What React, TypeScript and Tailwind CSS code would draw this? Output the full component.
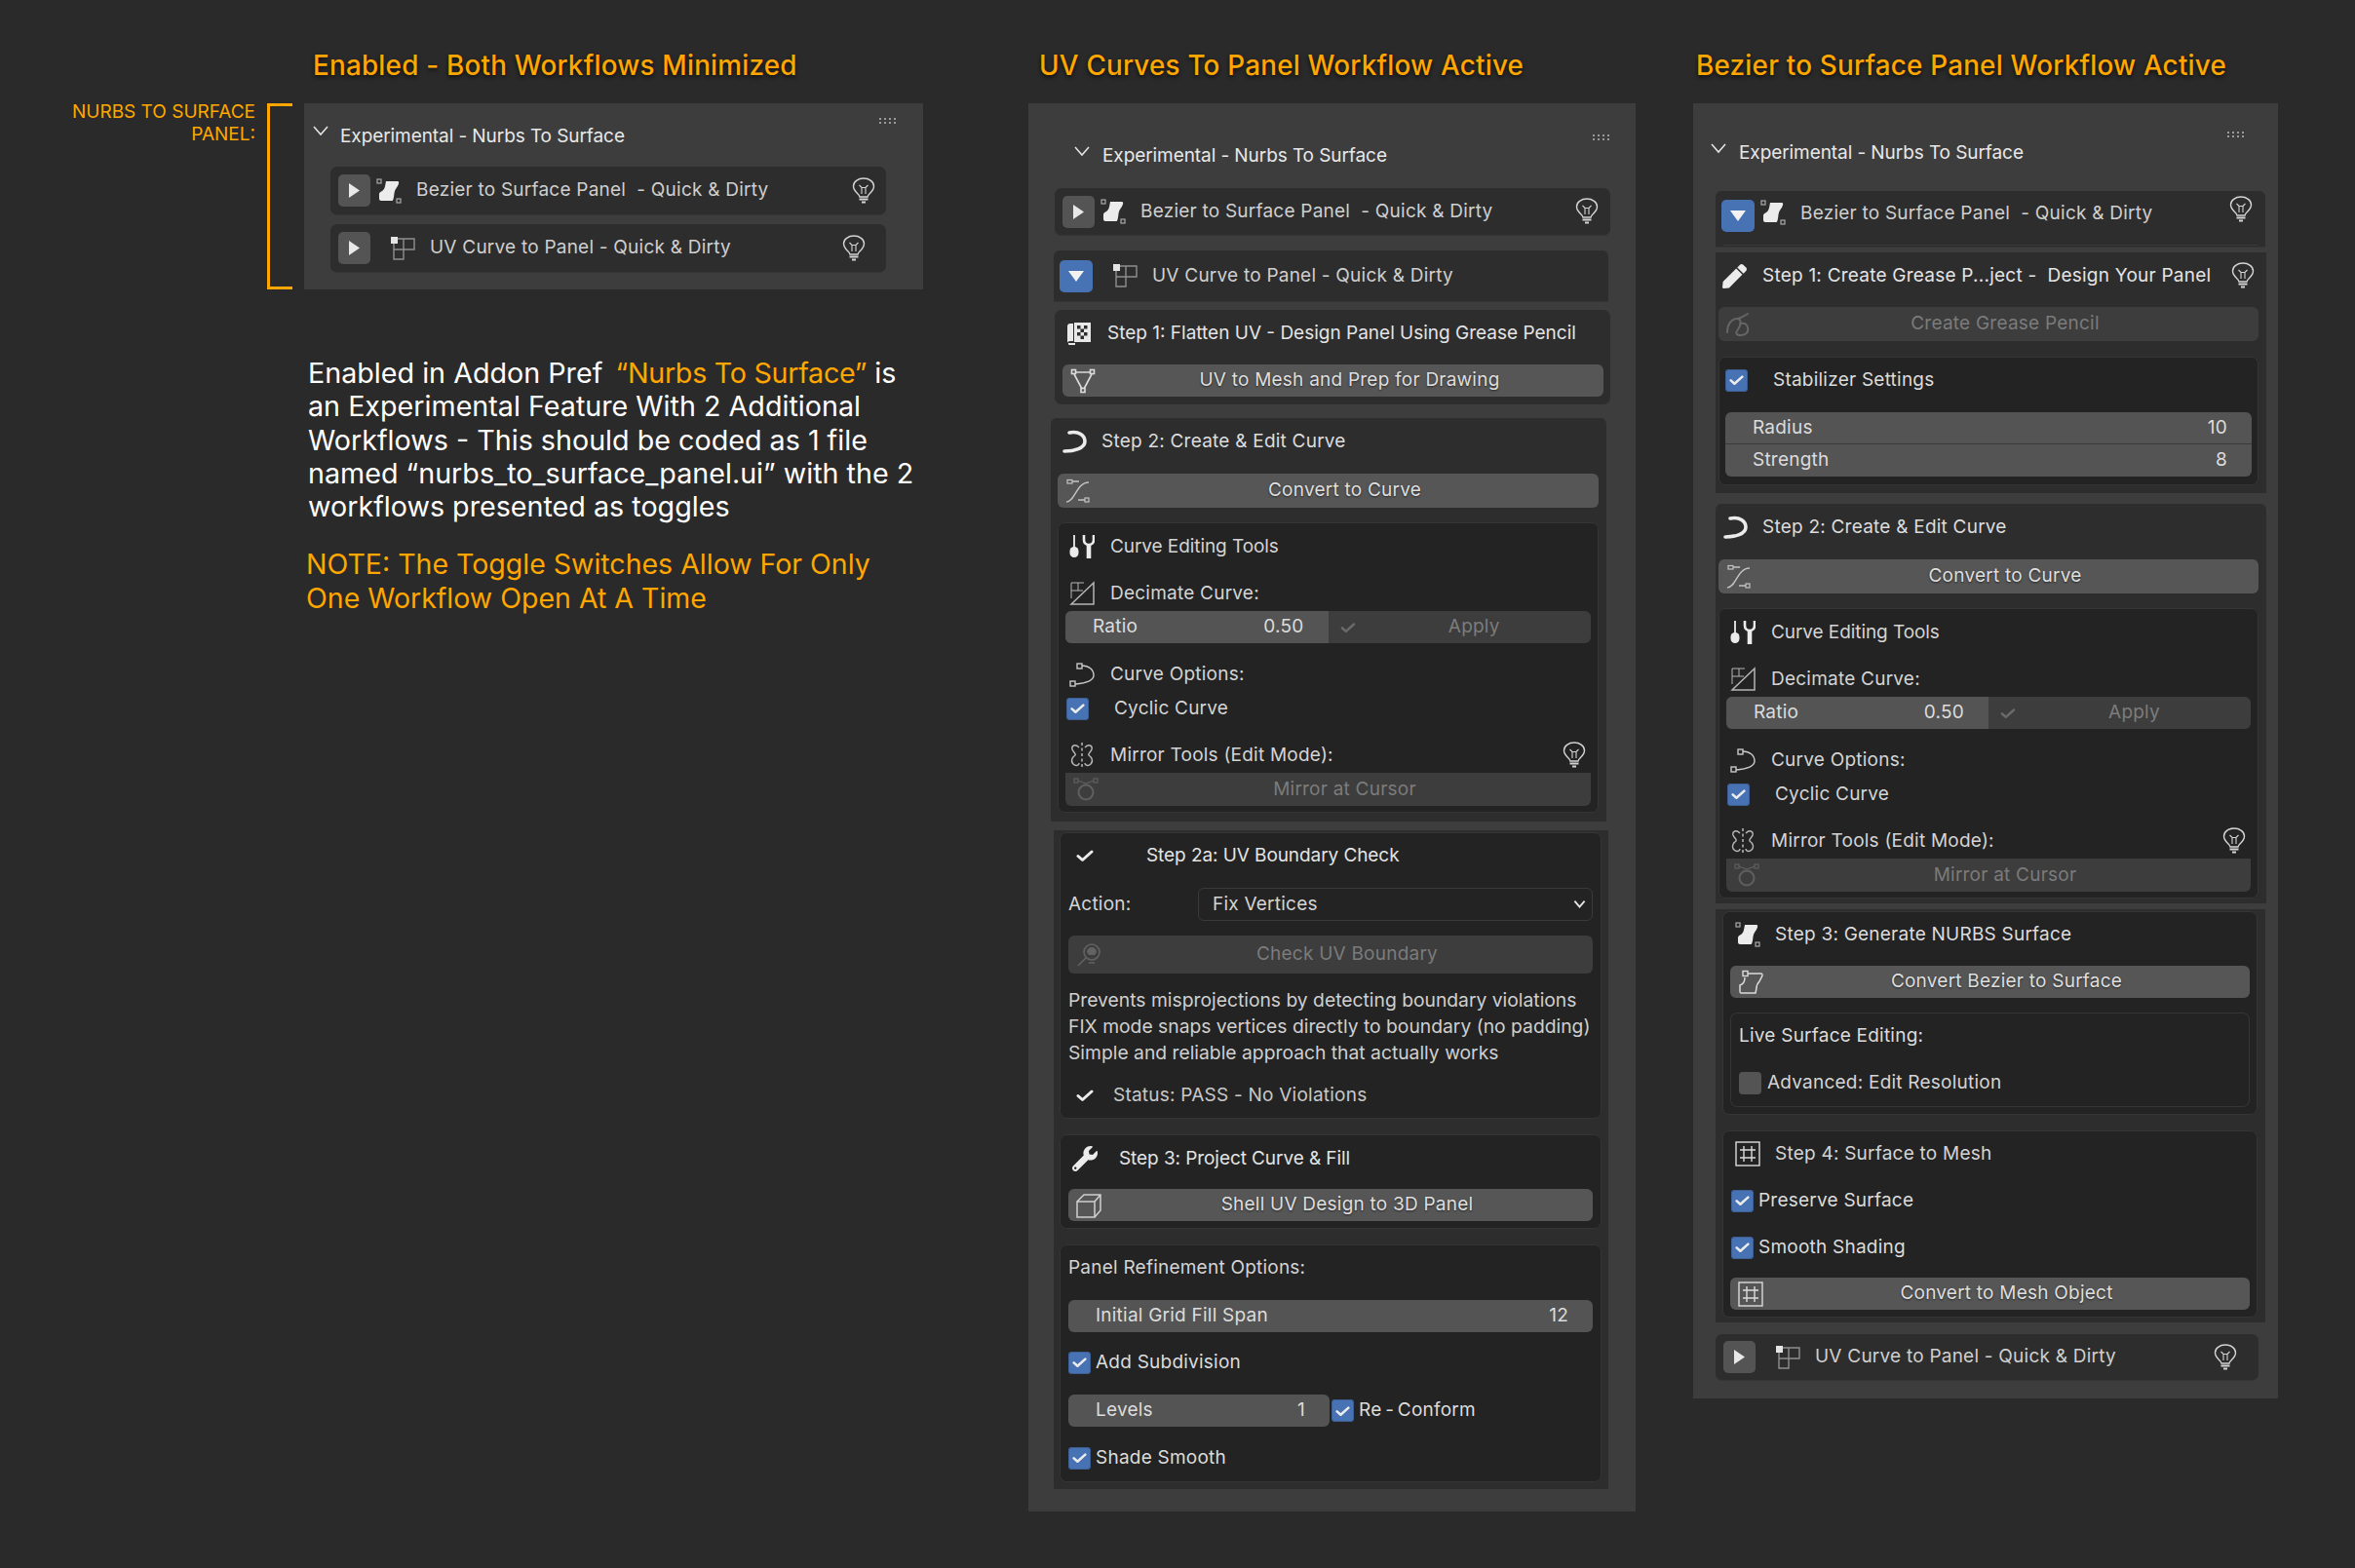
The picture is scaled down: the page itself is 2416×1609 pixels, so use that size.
import type { ReactNode } from "react";
import { FaPen, FaWrench } from "react-icons/fa";

const Svg = ({ children, className = "" }: { children: ReactNode; className?: string }) => (
  <svg viewBox="0 0 26 26" fill="none" stroke="currentColor" strokeWidth="1.6" className={`h-[26px] w-[26px] shrink-0 ${className}`}>
    {children}
  </svg>
);

const Chevron = ({ className = "h-[11px] w-[16px]", weight = 1.5 }: { className?: string; weight?: number }) => (
  <svg viewBox="0 0 16 11" fill="none" stroke="#e6e6e6" strokeWidth={weight} className={className}>
    <path d="M1 1l7 8 7-8" />
  </svg>
);

const Grip = ({ className = "" }: { className?: string }) => (
  <svg viewBox="0 0 18 6" fill="#9a9a9a" className={`absolute h-[6px] w-[18px] ${className}`}>
    {[0, 5, 10, 15].map((x) => (
      <g key={x}>
        <rect x={x} y="0" width="2" height="2" />
        <rect x={x} y="4" width="2" height="2" />
      </g>
    ))}
  </svg>
);

const SurfaceIcon = ({ className = "text-[#ececec]" }: { className?: string }) => (
  <Svg className={className}>
    <rect x="1" y="1" width="4" height="4" stroke="#aaa" strokeWidth="1.2" />
    <rect x="21" y="21" width="4" height="4" stroke="#aaa" strokeWidth="1.2" />
    <path fill="currentColor" stroke="none" d="M10 3h12c1 0 1.500 1 1 2.500C22 9 19 11 18.500 15c-.2 3-1 8-2 8H5c-1 0-2-1-2-2v-5c0-1 1-2 3-3 3-2 3-5 4-10z" />
  </Svg>
);

const UvIcon = () => (
  <Svg className="text-[#8f8f8f]">
    <rect x="1" y="1" width="7" height="7" fill="#e4e4e4" stroke="none" />
    <path strokeWidth="1.4" d="M8 3h17v11H4M14 3v21H4V8" />
  </Svg>
);

const Bulb = ({ className = "" }: { className?: string }) => (
  <svg viewBox="0 0 24 28" fill="none" stroke="#d4d4d4" strokeWidth="1.4" className={`h-[28px] w-[24px] shrink-0 ${className}`}>
    <path d="M8 20c0-3-6.500-5-6.500-11a10.500 8 0 0 1 21 0c0 6-6.500 8-6.500 11z" />
    <path d="M7.500 8l2.500 2.500h4L16.500 8M10 10.500V17M14 10.500V17" strokeWidth="1.100" />
    <path d="M7.500 22.500h9M10 25.500h4" strokeWidth="1.800" />
  </svg>
);

const FlattenIcon = () => (
  <Svg className="text-[#e8e8e8]">
    <path fill="currentColor" stroke="none" d="M1 6c0-2 1-3 3-3h3v18H4c-2 0-3 1-3 2zM2 23h7v2H3c-1 0-1-1-1-2z" />
    <path fill="currentColor" stroke="none" d="M8 2h17v20H8zm3 3v3.500h3.500V5zm7 0v3.500h3.500V5zm-3.500 3.500V12H18V8.500zM11 12v3.500h3.500V12zm7 0v3.500h3.500V12zm-3.500 3.500V19H18v-3.500z" fillRule="evenodd" />
  </Svg>
);

const MeshIcon = () => (
  <Svg className="text-[#dcdcdc]">
    <path d="M5 4h16M4 6l8 15M22 6l-8 15" />
    <rect x="1.500" y="1.500" width="4" height="4" />
    <rect x="20.500" y="1.500" width="4" height="4" />
    <rect x="11" y="20.500" width="4" height="4" />
  </Svg>
);

const HookIcon = () => (
  <Svg className="text-[#ececec]">
    <path strokeWidth="3.600" strokeLinecap="round" d="M8 4c10-2 16 3 16 9 0 7-11 10-21 10" />
  </Svg>
);

const BezierIcon = () => (
  <Svg className="text-[#c4c4c4]">
    <path strokeWidth="1.400" d="M1 24c9 0 10-20 23-20M7 3h7M13 22h7" />
    <rect x="2" y="1.500" width="5" height="3.500" strokeWidth="1.200" />
    <rect x="20" y="20" width="4" height="4" strokeWidth="1.200" />
  </Svg>
);

const ToolsIcon = () => (
  <Svg className="text-[#ececec]">
    <path strokeWidth="1.800" d="M5 1v13" />
    <rect x="0.500" y="13" width="9" height="11" rx="4.500" fill="currentColor" stroke="none" />
    <path strokeWidth="2.600" d="M15 1v5c0 3 2 5 5 5s5-2 5-5V1" />
    <path strokeWidth="4.600" d="M20 10v15" />
  </Svg>
);

const DecimateIcon = () => (
  <Svg className="text-[#b5b5b5]">
    <path strokeWidth="1.500" d="M2 24L25 2v22z" />
    <path strokeWidth="1" d="M2 18V2h13M2 10h12M9 2v8" />
  </Svg>
);

const CurveOptionsIcon = () => (
  <Svg className="text-[#c8c8c8]">
    <path strokeWidth="1.400" d="M13 4c7 0 12 4 12 10 0 5-8 8-19 9" />
    <rect x="8" y="2" width="5" height="5" strokeWidth="1.400" />
    <rect x="1" y="20" width="5" height="5" strokeWidth="1.400" />
  </Svg>
);

const MirrorIcon = () => (
  <Svg className="text-[#b8b8b8]">
    <path strokeWidth="1.400" d="M10 5C6 1 2 3 3 7c1 3 4 4 3 6-3 2-5 6-2 9 3 3 6 1 6-1M16 5c4-4 8-2 7 2-1 3-4 4-3 6 3 2 5 6 2 9-3 3-6 1-6-1" />
    <path strokeWidth="1.500" strokeDasharray="3 2.500" d="M13 0v26" />
  </Svg>
);

const CursorIcon = () => (
  <Svg className="text-[#5f5f5f]">
    <circle cx="13" cy="16" r="7.500" strokeWidth="2" />
    <path strokeWidth="1.200" d="M5 4l8 3 8-3" />
    <rect x="1" y="2" width="4" height="4" strokeWidth="1.200" />
    <rect x="21" y="2" width="4" height="4" strokeWidth="1.200" />
  </Svg>
);

const CheckIcon = ({ className = "h-[14px] w-[18px]" }: { className?: string }) => (
  <svg viewBox="0 0 18 14" fill="none" stroke="#ececec" strokeWidth="3" strokeLinecap="round" strokeLinejoin="round" className={`shrink-0 ${className}`}>
    <path d="M2 7.500l4.500 4L16 3" />
  </svg>
);

const SearchIcon = () => (
  <Svg className="text-[#626262]">
    <circle cx="16" cy="10" r="8" strokeWidth="1.600" />
    <path fill="currentColor" stroke="none" d="M11 10a5 5 0 0 1 10 0l-2 3h-6z" />
    <path strokeWidth="1.600" d="M10 16l-8 8M13 21h6" />
  </Svg>
);

const CubeIcon = () => (
  <Svg className="text-[#d0d0d0]">
    <path strokeWidth="1.500" d="M1 9h18v16H1zM1 9l7-7h17v16l-6 7M19 9l6-7" />
  </Svg>
);

const SquiggleIcon = () => (
  <Svg className="text-[#666]">
    <path strokeWidth="2" strokeLinecap="round" d="M1 21c0-8 4-14 10-14 5 0 4 7 1 11s-2 6 3 6c5 0 8-3 7-8-1-4-4-5-7-4M12 7c3-1 7-3 10-5" />
  </Svg>
);

const SurfaceOutlineIcon = () => (
  <Svg className="text-[#dcdcdc]">
    <rect x="5" y="1.500" width="5" height="5" strokeWidth="1.400" />
    <path strokeWidth="1.500" d="M10 4h14c1 0 1 1 1 2l-3 6c-2 2-3 4-3 7l-1 5H3c-1 0-1-1-1-2v-6c3-1 5-3 5-8" />
  </Svg>
);

const GridIcon = () => (
  <Svg className="text-[#dcdcdc]">
    <rect x="1" y="1" width="24" height="24" strokeWidth="1.400" />
    <path strokeWidth="1.400" d="M9 5v16M17 5v16M5 9h16M5 17h16" />
  </Svg>
);

// the outline is an inset shadow, so it takes no room from the rows inside
const Box = ({ className = "", children }: { className?: string; children: ReactNode }) => (
  <div className={`rounded-[7px] bg-[#232323] shadow-[inset_0_0_0_1px_#353535] ${className}`}>{children}</div>
);

const Check = ({ on = true }: { on?: boolean }) => (
  <span className={`flex h-[23px] w-[23px] shrink-0 items-center justify-center rounded-[4px] ${on ? "bg-[#4772b3] shadow-[inset_0_0_0_1px_#3d5f94]" : "bg-[#545454]"}`}>
    {on && <CheckIcon className="h-[12px] w-[15px]" />}
  </span>
);

const Btn = ({ icon, label, dim = false, className = "" }: { icon: ReactNode; label: string; dim?: boolean; className?: string }) => (
  <div className={`flex items-center rounded-[6px] pl-[8px] ${dim ? "bg-[#3d3d3d] text-[#7b7b7b]" : "bg-[#565656] text-[#dedede] [text-shadow:0_1px_2px_rgba(0,0,0,0.55)]"} ${className}`}>
    {icon}
    <span className="flex-1 text-center">{label}</span>
  </div>
);

const Field = ({ label, value, className = "" }: { label: string; value: string; className?: string }) => (
  <div className={`flex h-[33px] items-center justify-between bg-[#545454] pl-[28px] pr-[25px] text-[#dcdcdc] ${className}`}>
    <span>{label}</span>
    <span>{value}</span>
  </div>
);

const Toggle = ({ active }: { active: boolean }) => (
  <span className={`flex h-[33px] shrink-0 items-center justify-center rounded-[5px] ${active ? "w-[34px] bg-[#4772b3]" : "w-[33px] bg-[#545454]"}`}>
    {active ? (
      <svg viewBox="0 0 16 12" fill="#f2f2f2" className="mt-[1px] h-[12px] w-[16px]"><path d="M0 0h16L8 11z" /></svg>
    ) : (
      <svg viewBox="0 0 11 15" fill="#e8e8e8" className="h-[15px] w-[11px]"><path d="M0 0l11 7.500L0 15z" /></svg>
    )}
  </span>
);

const BEZIER = "Bezier to Surface Panel  - Quick & Dirty";
const UVCURVE = "UV Curve to Panel - Quick & Dirty";

const Workflow = ({ kind, active = false, bulbClass = "", className = "" }: { kind: "bezier" | "uv"; active?: boolean; bulbClass?: string; className?: string }) => (
  <div className={`flex items-center bg-[#2d2d2d] shadow-[0_1px_0_#353535] ${active ? "pl-[6px]" : "pl-[8px]"} ${className}`}>
    <Toggle active={active} />
    {kind === "bezier" ? (
      <>
        <span className="ml-[6px]"><SurfaceIcon /></span>
        <span className="ml-[15px] whitespace-pre text-[#cfcfcf]">{BEZIER}</span>
      </>
    ) : (
      <>
        <span className="ml-[20px]"><UvIcon /></span>
        <span className="ml-[15px] whitespace-pre text-[#cfcfcf]">{UVCURVE}</span>
      </>
    )}
    {bulbClass && <Bulb className={`ml-auto ${bulbClass}`} />}
  </div>
);

const Header = ({ heightClass, chevronClass, textClass }: { heightClass: string; chevronClass: string; textClass: string }) => (
  <div className={`flex items-center tracking-[-0.004em] text-[#e8e8e8] ${heightClass}`}>
    <span className={chevronClass}><Chevron /></span>
    <span className={textClass}>Experimental - Nurbs To Surface</span>
  </div>
);

const Title = ({ children, className = "" }: { children: ReactNode; className?: string }) => (
  <div className={`mb-[10px] flex h-[56px] items-center whitespace-nowrap text-[27.8px] font-medium text-[#ffa600] [text-shadow:0_2px_4px_rgba(0,0,0,0.7)] ${className}`}>{children}</div>
);

const IconRow = ({ icon, children, className = "" }: { icon: ReactNode; children: ReactNode; className?: string }) => (
  <div className={`flex h-[32px] items-center pl-[12px] text-[#d4d4d4] ${className}`}>
    {icon}
    <span className="ml-[16px]">{children}</span>
  </div>
);

const CheckRow = ({ label, className = "" }: { label: string; className?: string }) => (
  <div className={`flex h-[32px] items-center gap-[5px] pl-[9px] text-[#dcdcdc] ${className}`}>
    <Check />
    <span>{label}</span>
  </div>
);

const CurveSection = ({ outerClass }: { outerClass: string }) => (
  <div className={`rounded-t-[6px] bg-[#2d2d2d] pr-[8px] ${outerClass}`}>
    <div className="flex h-[48px] items-center pl-[4px] text-[#dcdcdc]">
      <HookIcon />
      <span className="ml-[15px]">Step 2: Create &amp; Edit Curve</span>
    </div>
    <Btn icon={<BezierIcon />} label="Convert to Curve" className="mt-[9px] h-[35px]" />
    <Box className="mt-[15px] h-[298px] pt-[9px]">
      <IconRow icon={<ToolsIcon />} className="tracking-[-0.004em]">Curve Editing Tools</IconRow>
      <IconRow icon={<DecimateIcon />} className="mt-[16px]">Decimate Curve:</IconRow>
      <div className="mx-[8px] mt-[2px] flex h-[33px] overflow-hidden rounded-[6px] bg-[#3d3d3d]">
        <Field label="Ratio" value="0.50" className="w-1/2" />
        <div className="flex flex-1 items-center pl-[12px] text-[#7c7c7c]">
          <CheckIcon className="h-[12px] w-[16px] opacity-25" />
          <span className="flex-1 pl-[2px] text-center">Apply</span>
        </div>
      </div>
      <IconRow icon={<CurveOptionsIcon />} className="mt-[16px]">Curve Options:</IconRow>
      <div className="flex h-[38px] items-center gap-[26px] pl-[9px] text-[#d4d4d4]">
        <Check />
        <span>Cyclic Curve</span>
      </div>
      <div className="mt-[13px] flex h-[32px] items-center pr-[13px]">
        <IconRow icon={<MirrorIcon />}>Mirror Tools (Edit Mode):</IconRow>
        <Bulb className="ml-auto" />
      </div>
      <Btn icon={<CursorIcon />} dim label="Mirror at Cursor" className="mx-[8px] mt-[2px] h-[34px] rounded-t-none" />
    </Box>
  </div>
);

export default function App() {
  return (
    <div className="flex h-[1609px] w-[2416px] overflow-hidden bg-[#2a2a2a] pt-[40px] font-['Inter',sans-serif] text-[19px] tracking-[0.012em]">
      {/* first column: both workflows closed, plus the notes */}
      <div className="w-[947px] shrink-0">
        <Title className="ml-[321px]">Enabled - Both Workflows Minimized</Title>
        <div className="flex h-[191px]">
          <div className="-mt-[3px] w-[262px] shrink-0 text-right text-[19px] leading-[23px] tracking-normal text-[#ffa600]">
            NURBS TO SURFACE
            <br />
            PANEL:
          </div>
          <div className="ml-[12px] w-[26px] shrink-0 border-y-[3px] border-l-[3px] border-[#ffa600]" />
          <div className="relative ml-[12px] w-[635px] shrink-0 bg-[#3d3d3d]">
            <Grip className="right-[27px] top-[15px]" />
            <Header heightClass="h-[65px] pt-[3px]" chevronClass="ml-[9px] -mt-[12px]" textClass="ml-[12px]" />
            <Workflow kind="bezier" bulbClass="mr-[11px]" className="ml-[27px] h-[49px] w-[570px] rounded-[7px]" />
            <Workflow kind="uv" bulbClass="mr-[21px]" className="ml-[27px] mt-[10px] h-[49px] w-[570px] rounded-[7px]" />
          </div>
        </div>
        <p className="ml-[316px] mt-[69px] w-[640px] text-[28.7px] leading-[34.3px] tracking-normal text-white">
          Enabled in Addon Pref{"\u2009 "}<span className="tracking-[-0.01em] text-[#ffa600]">“Nurbs To Surface”</span> is an Experimental Feature With 2 Additional Workflows - This should be coded as 1 file named “nurbs_to_surface_panel.ui” with the 2 workflows presented as toggles
        </p>
        <p className="ml-[314px] mt-[25px] w-[640px] text-[28.5px] leading-[34.3px] tracking-normal text-[#ffa600]">
          NOTE: The Toggle Switches Allow For Only One Workflow Open At A Time
        </p>
      </div>

      {/* second column: UV curves workflow */}
      <div className="ml-[108px] w-[623px] shrink-0">
        <Title className="ml-[11px]">UV Curves To Panel Workflow Active</Title>
        <div className="relative h-[1445px] bg-[#3d3d3d] pl-[27px]">
          <Grip className="right-[26px] top-[32px]" />
          <Header heightClass="h-[87px] pt-[21px] -ml-[27px]" chevronClass="ml-[47px] -mt-[10px]" textClass="ml-[13px]" />
          <Workflow kind="bezier" bulbClass="mr-[12px]" className="h-[48px] w-[570px] rounded-[7px]" />
          <Workflow kind="uv" active className="-ml-[1px] mt-[16px] h-[52px] w-[569px] rounded-t-[6px]" />
          <div className="mt-[9px] h-[97px] w-[570px] rounded-[7px] bg-[#2d2d2d] pl-[8px] pr-[7px]">
            <div className="flex h-[48px] items-center pl-[4px] tracking-normal text-[#e4e4e4]">
              <FlattenIcon />
              <span className="ml-[16px]">Step 1: Flatten UV - Design Panel Using Grease Pencil</span>
            </div>
            <Btn icon={<MeshIcon />} label="UV to Mesh and Prep for Drawing" className="mt-[8px] h-[33px]" />
          </div>
          <CurveSection outerClass="-ml-[4px] mt-[14px] h-[414px] w-[570px] pl-[7px]" />
          <div className="-ml-[1px] mt-[9px] h-[676px] w-[569px] bg-[#2d2d2d] pl-[6px] pr-[7px] pt-[2px]">
            <Box className="h-[294px] px-[9px]">
              <div className="flex h-[48px] items-center pl-[8px] tracking-[-0.004em] text-[#e4e4e4]">
                <CheckIcon />
                <span className="ml-[54px]">Step 2a: UV Boundary Check</span>
              </div>
              <div className="mt-[9px] flex h-[34px] items-center text-[#d4d4d4]">
                <span className="w-[133px]">Action:</span>
                <div className="flex h-[34px] flex-1 items-center justify-between rounded-[6px] border border-[#3a3a3a] pl-[14px] pr-[6px]">
                  <span>Fix Vertices</span>
                  <Chevron className="h-[8px] w-[13px]" weight={2.6} />
                </div>
              </div>
              <Btn icon={<SearchIcon />} dim label="Check UV Boundary" className="mt-[15px] h-[39px]" />
              <div className="mt-[14px] whitespace-nowrap text-[19.3px] leading-[27px] tracking-normal text-[#cfcfcf]">
                <div>Prevents misprojections by detecting boundary violations</div>
                <div>FIX mode snaps vertices directly to boundary (no padding)</div>
                <div>Simple and reliable approach that actually works</div>
              </div>
              <div className="mt-[10px] flex h-[40px] items-center pl-[8px] text-[#c8c8c8]">
                <CheckIcon />
                <span className="ml-[20px]">Status: PASS - No Violations</span>
              </div>
            </Box>
            <Box className="mt-[16px] h-[97px] px-[9px]">
              <div className="flex h-[50px] items-center pl-[4px] tracking-[-0.004em] text-[#e4e4e4]">
                <FaWrench className="h-[26px] w-[26px] text-[#ececec]" />
                <span className="ml-[22px]">Step 3: Project Curve &amp; Fill</span>
              </div>
              <Btn icon={<CubeIcon />} label="Shell UV Design to 3D Panel" className="mt-[6px] h-[33px]" />
            </Box>
            <Box className="mt-[16px] h-[244px] px-[9px]">
              <div className="flex h-[48px] items-center text-[#d4d4d4]">Panel Refinement Options:</div>
              <Field label="Initial Grid Fill Span" value="12" className="mt-[9px] rounded-[6px]" />
              <CheckRow label="Add Subdivision" className="-ml-[9px] mt-[15px]" />
              <div className="mt-[17px] flex h-[33px] items-center">
                <Field label="Levels" value="1" className="w-[268px] rounded-[6px]" />
                <div className="ml-[2px] flex items-center gap-[5px] text-[#dcdcdc]">
                  <Check />
                  <span>{"Re\u2009-\u2009Conform"}</span>
                </div>
              </div>
              <CheckRow label="Shade Smooth" className="-ml-[9px] mt-[16px]" />
            </Box>
          </div>
        </div>
      </div>

      {/* third column: bezier workflow */}
      <div className="ml-[59px] w-[600px] shrink-0">
        <Title className="ml-[3px]">Bezier to Surface Panel Workflow Active</Title>
        <div className="relative h-[1329px] bg-[#3d3d3d] pl-[23px]">
          <Grip className="right-[34px] top-[29px]" />
          <Header heightClass="h-[90px] pt-[12px] -ml-[23px]" chevronClass="ml-[18px] -mt-[10px]" textClass="ml-[13px]" />
          <div className="relative">
            <Workflow kind="bezier" active bulbClass="mr-[13px] -mt-[2px]" className="h-[57px] w-[564px] items-start rounded-t-[6px] pt-[7px] [&>span]:mt-[2px]" />
            <div className="absolute bottom-0 left-[7px] h-[2px] w-[550px] rounded-t-[4px] border-t border-[#3a3a3a]" />
          </div>
          <div className="mt-[6px] h-[247px] w-[565px] bg-[#2d2d2d] pl-[3px] pr-[8px]">
            <div className="flex h-[48px] items-center whitespace-pre pl-[4px] text-[#e4e4e4]">
              <FaPen className="h-[25px] w-[25px] text-[#ececec]" />
              <span className="ml-[16px]">Step 1: Create Grease P...ject -  Design Your Panel</span>
              <Bulb className="ml-auto mr-[4px]" />
            </div>
            <Btn icon={<SquiggleIcon />} dim label="Create Grease Pencil" className="mt-[8px] h-[35px]" />
            <Box className="mt-[16px] h-[132px] px-[7px]">
              <div className="flex h-[48px] items-center text-[#dcdcdc]">
                <Check />
                <span className="ml-[26px]">Stabilizer Settings</span>
              </div>
              <Field label="Radius" value="10" className="mt-[9px] rounded-t-[6px] border-b border-[#3a3a3a]" />
              <Field label="Strength" value="8" className="rounded-b-[6px]" />
            </Box>
          </div>
          <CurveSection outerClass="mt-[11px] h-[410px] w-[565px] pl-[3px]" />
          <div className="mt-[6px] h-[424px] w-[564px] bg-[#2d2d2d] pl-[7px] pr-[8px] pt-[2px]">
            <Box className="h-[209px] px-[8px]">
              <div className="flex h-[48px] items-center pl-[5px] text-[#dcdcdc]">
                <SurfaceIcon />
                <span className="ml-[15px]">Step 3: Generate NURBS Surface</span>
              </div>
              <Btn icon={<SurfaceOutlineIcon />} label="Convert Bezier to Surface" className="mt-[8px] h-[33px]" />
              <Box className="mt-[15px] h-[97px] bg-[#212121] pl-[9px]">
                <div className="flex h-[48px] items-center text-[#dcdcdc]">Live Surface Editing:</div>
                <div className="mt-[4px] flex h-[40px] items-center gap-[6px] text-[#d4d4d4]">
                  <Check on={false} />
                  <span>Advanced: Edit Resolution</span>
                </div>
              </Box>
            </Box>
            <Box className="mt-[16px] h-[192px] px-[8px]">
              <div className="flex h-[48px] items-center pl-[5px] text-[#d4d4d4]">
                <GridIcon />
                <span className="ml-[15px]">Step 4: Surface to Mesh</span>
              </div>
              <CheckRow label="Preserve Surface" className="-ml-[8px] mt-[8px]" />
              <CheckRow label="Smooth Shading" className="-ml-[8px] mt-[16px]" />
              <Btn icon={<GridIcon />} label="Convert to Mesh Object" className="mt-[15px] h-[33px]" />
            </Box>
          </div>
          <Workflow kind="uv" bulbClass="mr-[22px]" className="mt-[12px] h-[47px] w-[557px] rounded-[7px]" />
        </div>
      </div>
    </div>
  );
}
